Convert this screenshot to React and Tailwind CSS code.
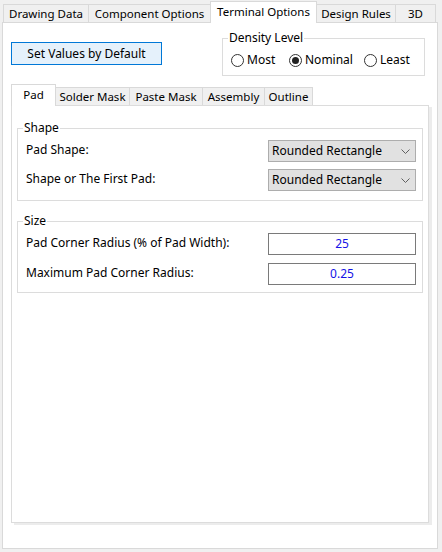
import React from 'react';

// Tab header used for both the outer and the inner tab strips
const Tab = ({ label, active, w, first }) =>
  active ? (
    <div
      className={`relative z-10 -mb-px flex h-[22px] shrink-0 justify-center border border-b-0 border-[#d9d9d9] bg-white pt-[2px] ${first ? '' : '-ml-px'} ${w}`}
    >
      <span className="text-[11.5px] leading-[16px]">{label}</span>
    </div>
  ) : (
    <div
      className={`flex h-[18px] shrink-0 items-center justify-center border border-b-0 border-[#d9d9d9] bg-[#f0f0f0] pt-px ${first ? '' : '-ml-px'} ${w}`}
    >
      <span className="text-[11.5px] leading-[16px]">{label}</span>
    </div>
  );

const Radio = ({ label, checked, w }) => (
  <div className={`flex items-center ${w}`}>
    <span className="flex h-[13px] w-[13px] items-center justify-center rounded-full border border-[#333333] bg-white">
      {checked && <span className="h-[7px] w-[7px] rounded-full bg-[#222222]" />}
    </span>
    <span className="ml-[3px] leading-[16px]">{label}</span>
  </div>
);

const Group = ({ title, className, children }) => (
  <fieldset className={`border border-[#dcdcdc] ${className}`}>
    <legend className="ml-[5px] px-px leading-[16px]">{title}</legend>
    {children}
  </fieldset>
);

const Select = ({ value }) => (
  <div className="flex h-[22px] w-[148px] items-center justify-between border border-[#adadad] bg-[#e1e1e1] pl-[3px] pr-[5px]">
    <span className="leading-[16px]">{value}</span>
    <svg width="9" height="5" viewBox="0 0 9 5" fill="none">
      <path d="M0.5 0.5 L4.5 4.5 L8.5 0.5" stroke="#606060" strokeWidth="1" />
    </svg>
  </div>
);

const NumberBox = ({ value }) => (
  <div className="flex h-[22px] w-[148px] items-center justify-center border border-[#7a7a7a] bg-white text-[#1414e6]">
    <span className="leading-[16px]">{value}</span>
  </div>
);

const Row = ({ label, children }) => (
  <div className="flex items-center justify-between pl-[8px] pr-[6px]">
    <span className="-mt-[2px] leading-[16px]">{label}</span>
    {children}
  </div>
);

export default function App() {
  return (
    <div className="h-[552px] w-[442px] bg-[#f0f0f0] pt-px font-['Noto_Sans',sans-serif] text-[12px] text-black">
      {/* outer tabs */}
      <div className="flex h-[21px] items-end pl-[3px]">
        <Tab label="Drawing Data" w="w-[86px]" first />
        <Tab label="Component Options" w="w-[123px]" />
        <Tab label="Terminal Options" w="w-[107px]" active />
        <Tab label="Design Rules" w="w-[80px]" />
        <Tab label="3D" w="w-[41px]" />
      </div>

      <div className="ml-[2px] h-[527px] w-[436px] border border-[#d9d9d9] bg-white">
        {/* top row: default button + density level */}
        <div className="flex items-start pl-[8px] pt-[7px]">
          <button className="mt-[12px] h-[23px] w-[151px] border border-[#0078d7] bg-[#e5f1fb] leading-[16px]">
            Set Values by Default
          </button>
          <Group title="Density Level" className="ml-[60px] w-[203px]">
            <div className="flex pb-[7px] pl-[8px] pt-[6px]">
              <Radio label="Most" w="w-[58px]" />
              <Radio label="Nominal" w="w-[75px]" checked />
              <Radio label="Least" w="w-[60px]" />
            </div>
          </Group>
        </div>

        {/* inner tabs */}
        <div className="ml-[8px] mt-[8px] flex h-[21px] items-end">
          <Tab label="Pad" w="w-[45px]" active first />
          <Tab label="Solder Mask" w="w-[75px]" />
          <Tab label="Paste Mask" w="w-[74px]" />
          <Tab label="Assembly" w="w-[63px]" />
          <Tab label="Outline" w="w-[49px]" />
        </div>

        <div className="ml-[8px] h-[418px] w-[418px] border border-[#dcdcdc] bg-white pt-[14px] shadow-[3px_2px_0_0_#ececec]">
          <Group title="Shape" className="ml-[5px] w-[406px]">
            <div className="flex flex-col gap-[7px] pb-[9px] pt-[4px]">
              <Row label="Pad Shape:">
                <Select value="Rounded Rectangle" />
              </Row>
              <Row label="Shape or The First Pad:">
                <Select value="Rounded Rectangle" />
              </Row>
            </div>
          </Group>

          <Group title="Size" className="ml-[5px] mt-[12px] w-[406px]">
            <div className="flex flex-col gap-[8px] pb-[7px] pt-[4px]">
              <Row label="Pad Corner Radius (% of Pad Width):">
                <NumberBox value="25" />
              </Row>
              <Row label="Maximum Pad Corner Radius:">
                <NumberBox value="0.25" />
              </Row>
            </div>
          </Group>
        </div>
      </div>
    </div>
  );
}
